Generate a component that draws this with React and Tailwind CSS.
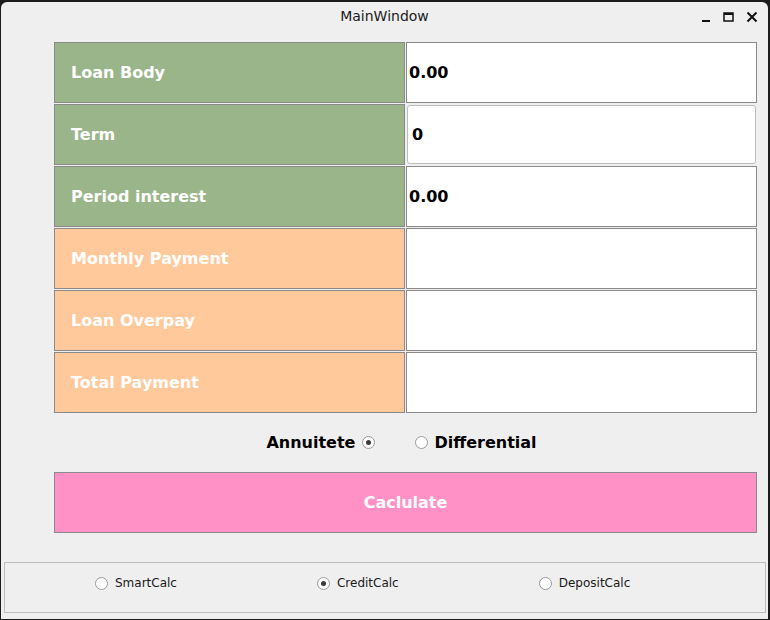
import { useState } from 'react'

const font = { fontFamily: '"DejaVu Sans", Verdana, sans-serif' }

function Radio({ checked }) {
  return (
    <span className="w-[13px] h-[13px] rounded-full border border-[#9a9a9a] bg-white flex items-center justify-center shrink-0">
      {checked && <span className="w-[5px] h-[5px] rounded-full bg-[#3a3a3a]" />}
    </span>
  )
}

function App() {
  const [mode, setMode] = useState('annuitete')
  const [calc, setCalc] = useState('credit')

  const inputs = [
    { label: 'Loan Body', value: '0.00', color: 'bg-[#9bb58a]' },
    { label: 'Term', value: '0', color: 'bg-[#9bb58a]', spin: true },
    { label: 'Period interest', value: '0.00', color: 'bg-[#9bb58a]' },
    { label: 'Monthly Payment', value: '', color: 'bg-[#ffc99c]' },
    { label: 'Loan Overpay', value: '', color: 'bg-[#ffc99c]' },
    { label: 'Total Payment', value: '', color: 'bg-[#ffc99c]' },
  ]

  return (
    <div className="w-[770px] h-[620px] bg-[#1c1c1c] pt-[2px] pl-[1px] pr-[2px] pb-[1px]" style={font}>
      <div className="h-full bg-[#efefef] rounded-t-[6px] flex flex-col">

        {/* Title bar */}
        <div className="h-[28px] flex items-center relative">
          <span className="w-full text-center text-[14px] text-[#1a1a1a]">MainWindow</span>
          <div className="absolute right-[10px] top-[9px] flex items-center gap-[12px]">
            <svg width="10" height="12" viewBox="0 0 10 12">
              <rect x="1" y="9" width="8" height="2" fill="#111" />
            </svg>
            <svg width="11" height="12" viewBox="0 0 11 12">
              <rect x="1" y="2" width="9" height="8" fill="none" stroke="#111" strokeWidth="1.5" />
              <rect x="1" y="2" width="9" height="2" fill="#111" />
            </svg>
            <svg width="12" height="12" viewBox="0 0 12 12">
              <path d="M1.5 1.5 L10.5 10.5 M10.5 1.5 L1.5 10.5" stroke="#111" strokeWidth="2" />
            </svg>
          </div>
        </div>

        {/* Form rows */}
        <div className="ml-[53px] w-[703px] mt-[12px] flex flex-col gap-[1px]">
          {inputs.map(row => (
            <div key={row.label} className="flex gap-[1px] h-[61px]">
              <div className={`w-[351px] ${row.color} border border-[#8a8a8a] flex items-center pl-[16px]`}>
                <span className="text-white font-bold text-[16px]">{row.label}</span>
              </div>
              {row.spin ? (
                <div className="w-[351px] p-[1px]">
                  <div className="h-full bg-white border border-[#bdbdbd] rounded-[3px] flex items-center pl-[4px]">
                    <span className="font-bold text-[16px] text-black">{row.value}</span>
                  </div>
                </div>
              ) : (
                <div className="w-[351px] bg-white border border-[#8a8a8a] flex items-center pl-[2px]">
                  <span className="font-bold text-[16px] text-black">{row.value}</span>
                </div>
              )}
            </div>
          ))}
        </div>

        {/* Payment type */}
        <div className="h-[59px] flex items-center justify-center ml-[53px] w-[703px] pr-[8px]">
          <div className="flex items-center cursor-pointer" onClick={() => setMode('annuitete')}>
            <span className="font-bold text-[16px] text-black mr-[7px]">Annuitete</span>
            <Radio checked={mode === 'annuitete'} />
          </div>
          <div className="flex items-center ml-[40px] cursor-pointer" onClick={() => setMode('differential')}>
            <Radio checked={mode === 'differential'} />
            <span className="font-bold text-[16px] text-black ml-[6px]">Differential</span>
          </div>
        </div>

        <button className="ml-[53px] w-[703px] h-[61px] bg-[#ff91c6] border border-[#8a8a8a] text-white font-bold text-[16px]">
          Caclulate
        </button>

        {/* Calc switcher */}
        <div className="mt-[29px] ml-[3px] w-[762px] h-[51px] border border-[#bcbcbc] flex items-start pt-[11px] text-[12px] text-[#1a1a1a]">
          {[
            { id: 'smart', label: 'SmartCalc', left: 'ml-[90px]' },
            { id: 'credit', label: 'CreditCalc', left: 'ml-[140px]' },
            { id: 'deposit', label: 'DepositCalc', left: 'ml-[140px]' },
          ].map(r => (
            <div key={r.id} className={`flex items-center ${r.left} cursor-pointer`} onClick={() => setCalc(r.id)}>
              <Radio checked={calc === r.id} />
              <span className="ml-[7px]">{r.label}</span>
            </div>
          ))}
        </div>
      </div>
    </div>
  )
}

export default App
